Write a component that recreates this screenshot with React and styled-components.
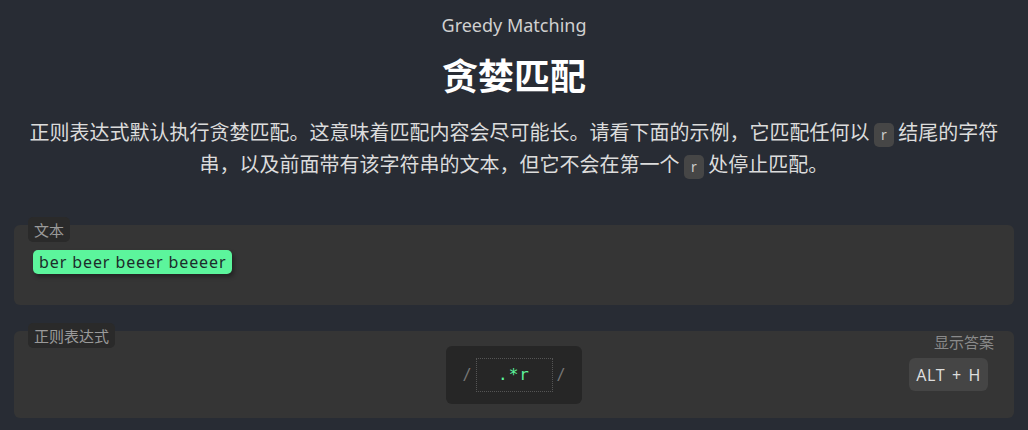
import React from 'react'
import styled, { createGlobalStyle } from 'styled-components'

const GlobalStyle = createGlobalStyle`
    html, body {
        margin: 0;
        padding: 0;
        background: #282c34;
    }
    body {
        font-family: "Noto Sans", "Noto Sans CJK SC", sans-serif;
        color: #ddd;
    }
`

const Page = styled.div`
    padding: 0 14px;
`

const Subtitle = styled.div`
    margin-top: 13px;
    font-size: 18px;
    line-height: 24px;
    text-align: center;
    color: #d0d0d0;
`

const Title = styled.h1`
    margin: 13px 0 0;
    font-family: "Noto Sans CJK SC", sans-serif;
    font-size: 36px;
    line-height: 48px;
    font-weight: 700;
    text-align: center;
    color: #fff;
`

const Intro = styled.p`
    margin: 18px 0 0;
    font-family: "Noto Sans CJK SC", sans-serif;
    font-size: 20px;
    line-height: 32px;
    text-align: center;
    color: #dcdcdc;
`

const Code = styled.code`
    display: inline-block;
    padding: 0 7px;
    line-height: 24px;
    border-radius: 5px;
    background: #464646;
    color: #ccc;
    font-family: "Noto Sans", sans-serif;
    font-size: 14px;
`

const Card = styled.section`
    position: relative;
    margin-top: ${p => p.$gap}px;
    height: ${p => p.$height}px;
    box-sizing: border-box;
    background: #353535;
    border-radius: 6px;
`

const Label = styled.span`
    position: absolute;
    left: 14px;
    top: -8px;
    padding: 0 6px;
    height: 25px;
    line-height: 25px;
    border-radius: 5px;
    background: #2a2a2a;
    color: #9a9a9a;
    font-family: "Noto Sans CJK SC", sans-serif;
    font-size: 15px;
`

const TextBody = styled.div`
    padding: 25px 19px 0;
`

const Match = styled.span`
    display: inline-block;
    padding: 0 6px;
    height: 24px;
    line-height: 24px;
    border-radius: 5px;
    background: #5cf59c;
    color: #1c2b2b;
    font-family: "Noto Sans", sans-serif;
    font-size: 16px;
    letter-spacing: 0.9px;
    box-shadow: 2px 3px 4px rgba(0, 0, 0, 0.35);
`

const RegexRow = styled.div`
    display: grid;
    grid-template-columns: 1fr auto 1fr;
    align-items: start;
    padding: 15px 20px 0;
`

const RegexBox = styled.div`
    grid-column: 2;
    display: flex;
    align-items: center;
    gap: 4px;
    height: 58px;
    padding: 0 16px;
    border-radius: 6px;
    background: #262626;
`

const Slash = styled.span`
    color: #777;
    font-family: "DejaVu Sans Mono", monospace;
    font-size: 15px;
`

const Input = styled.div`
    width: 75px;
    height: 32px;
    line-height: 32px;
    border: 1px dotted #555;
    text-align: center;
    color: #5cf59c;
    font-family: "DejaVu Sans Mono", monospace;
    font-size: 16px;
    letter-spacing: 1px;
`

const Answer = styled.div`
    grid-column: 3;
    justify-self: end;
    display: flex;
    flex-direction: column;
    align-items: flex-end;
    margin-top: -15px;
`

const AnswerText = styled.span`
    font-family: "Noto Sans CJK SC", sans-serif;
    font-size: 15px;
    line-height: 22px;
    color: #8a8a8a;
`

const Hotkey = styled.button`
    margin: 5px 6px 0 0;
    height: 33px;
    padding: 0 7px;
    border: none;
    border-radius: 6px;
    background: #454545;
    color: #ddd;
    font-family: "Noto Sans", sans-serif;
    font-size: 16px;
    letter-spacing: 0.6px;
    word-spacing: 2px;
`

export default function App() {
    return (
        <Page>
            <GlobalStyle />
            <Subtitle>Greedy Matching</Subtitle>
            <Title>贪婪匹配</Title>
            <Intro>
                正则表达式默认执行贪婪匹配。这意味着匹配内容会尽可能长。请看下面的示例，它匹配任何以 <Code>r</Code> 结尾的字符串，以及前面带有该字符串的文本，但它不会在第一个 <Code>r</Code> 处停止匹配。
            </Intro>
            <Card $gap={45} $height={80}>
                <Label>文本</Label>
                <TextBody>
                    <Match>ber beer beeer beeeer</Match>
                </TextBody>
            </Card>
            <Card $gap={26} $height={87}>
                <Label>正则表达式</Label>
                <RegexRow>
                    <RegexBox>
                        <Slash>/</Slash>
                        <Input>.*r</Input>
                        <Slash>/</Slash>
                    </RegexBox>
                    <Answer>
                        <AnswerText>显示答案</AnswerText>
                        <Hotkey>ALT + H</Hotkey>
                    </Answer>
                </RegexRow>
            </Card>
        </Page>
    )
}
